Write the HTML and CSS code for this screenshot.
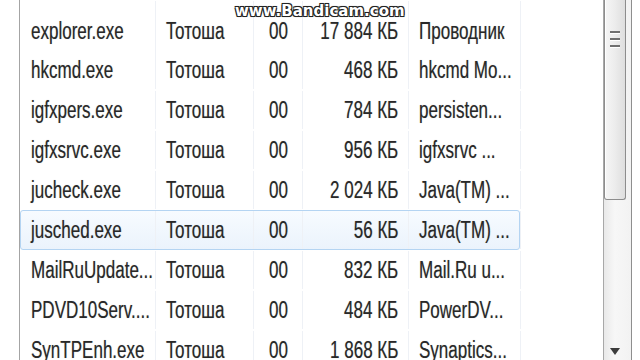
FILE: index.html
```html
<!DOCTYPE html>
<html lang="ru">
<head>
  <meta charset="UTF-8" />
  <meta name="viewport" content="width=device-width, initial-scale=1.0"/>
  <title>Диспетчер задач</title>
  <link rel="stylesheet" href="styles.css">
</head>
<body>

  <div class="window">
    <div class="list">
      <div class="row">
        <div class="cell name"><span>explorer.exe</span></div>
        <div class="cell user"><span>Тотоша</span></div>
        <div class="cell cpu"><span>00</span></div>
        <div class="cell mem"><span>17 884 КБ</span></div>
        <div class="cell desc"><span>Проводник</span></div>
      </div>
      <div class="row">
        <div class="cell name"><span>hkcmd.exe</span></div>
        <div class="cell user"><span>Тотоша</span></div>
        <div class="cell cpu"><span>00</span></div>
        <div class="cell mem"><span>468 КБ</span></div>
        <div class="cell desc"><span>hkcmd Mo...</span></div>
      </div>
      <div class="row">
        <div class="cell name"><span>igfxpers.exe</span></div>
        <div class="cell user"><span>Тотоша</span></div>
        <div class="cell cpu"><span>00</span></div>
        <div class="cell mem"><span>784 КБ</span></div>
        <div class="cell desc"><span>persisten...</span></div>
      </div>
      <div class="row">
        <div class="cell name"><span>igfxsrvc.exe</span></div>
        <div class="cell user"><span>Тотоша</span></div>
        <div class="cell cpu"><span>00</span></div>
        <div class="cell mem"><span>956 КБ</span></div>
        <div class="cell desc"><span>igfxsrvc ...</span></div>
      </div>
      <div class="row">
        <div class="cell name"><span>jucheck.exe</span></div>
        <div class="cell user"><span>Тотоша</span></div>
        <div class="cell cpu"><span>00</span></div>
        <div class="cell mem"><span>2 024 КБ</span></div>
        <div class="cell desc"><span>Java(TM) ...</span></div>
      </div>
      <div class="row selected">
        <div class="cell name"><span>jusched.exe</span></div>
        <div class="cell user"><span>Тотоша</span></div>
        <div class="cell cpu"><span>00</span></div>
        <div class="cell mem"><span>56 КБ</span></div>
        <div class="cell desc"><span>Java(TM) ...</span></div>
      </div>
      <div class="row">
        <div class="cell name"><span>MailRuUpdate...</span></div>
        <div class="cell user"><span>Тотоша</span></div>
        <div class="cell cpu"><span>00</span></div>
        <div class="cell mem"><span>832 КБ</span></div>
        <div class="cell desc"><span>Mail.Ru u...</span></div>
      </div>
      <div class="row">
        <div class="cell name"><span>PDVD10Serv....</span></div>
        <div class="cell user"><span>Тотоша</span></div>
        <div class="cell cpu"><span>00</span></div>
        <div class="cell mem"><span>484 КБ</span></div>
        <div class="cell desc"><span>PowerDV...</span></div>
      </div>
      <div class="row">
        <div class="cell name"><span>SynTPEnh.exe</span></div>
        <div class="cell user"><span>Тотоша</span></div>
        <div class="cell cpu"><span>00</span></div>
        <div class="cell mem"><span>1 868 КБ</span></div>
        <div class="cell desc"><span>Synaptics...</span></div>
      </div>
    </div>

    <div class="scrollbar">
      <div class="thumb">
        <span class="grip"></span>
        <span class="grip"></span>
        <span class="grip"></span>
      </div>
      <div class="arrow-down"></div>
    </div>
  </div>

  <div class="watermark">www.Bandicam.com</div>

</body>
</html>
```

FILE: styles.css
```css
* {
  margin: 0;
  padding: 0;
  box-sizing: border-box;
}

body {
  width: 640px;
  height: 360px;
  overflow: hidden;
  background: #fff;
  font-family: "Liberation Sans", sans-serif;
  font-size: 23px;
  color: #282828;
  position: relative;
}

.window {
  display: flex;
  height: 360px;
  margin-left: 19px;
  border-left: 1px solid #a4a4a4;
}

.list {
  width: 583px;
  padding-top: 10px;
}

.row {
  display: grid;
  grid-template-columns: 135px 98px 49px 106px 112px;
  width: 500px;
  height: 40px;
  align-items: center;
  border: 1px solid transparent;
  border-radius: 3px;
}

.row:first-child .cell {
  height: 50px;
  margin-top: -10px;
  padding-top: 10px;
}

.row.selected {
  border-color: #b4d4f2;
  background: linear-gradient(#f7fbff, #ebf3fc);
}

.cell {
  height: 100%;
  display: flex;
  align-items: center;
  padding-left: 10px;
  white-space: nowrap;
  border-right: 1px solid #eef1f6;
  text-shadow: 0 0 1px rgba(40, 40, 40, 0.35);
}

/* the capture is squeezed sideways, so the glyphs are narrow */
.cell span {
  display: inline-block;
  transform: scaleX(0.74);
  transform-origin: left center;
}

.cpu {
  padding-left: 15px;
}

.mem {
  justify-content: flex-end;
  padding-left: 0;
  padding-right: 10px;
}

.mem span {
  transform-origin: right center;
}

.scrollbar {
  width: 29px;
  position: relative;
  border-left: 1px solid #a8a8a8;
  border-right: 1px solid #8e8e8e;
  background: linear-gradient(to right, #e9e9e9, #f7f7f7 40%, #f2f2f2);
}

.thumb {
  height: 200px;
  width: 22px;
  border: 1px solid #8d8d8d;
  border-top: none;
  border-radius: 0 0 3px 3px;
  background: linear-gradient(to right, #f6f6f6, #ececec 50%, #dedede);
  box-shadow: inset 1px 0 0 #fff;
  display: flex;
  flex-direction: column;
  align-items: center;
  gap: 4px;
  padding-top: 31px;
}

.grip {
  width: 10px;
  height: 3px;
  background: #6f6f6f;
  border-bottom: 1px solid #fff;
}

.arrow-down {
  position: absolute;
  left: 6px;
  bottom: 5px;
  width: 0;
  height: 0;
  border-left: 5px solid transparent;
  border-right: 5px solid transparent;
  border-top: 7px solid #3c3c3c;
}

.watermark {
  position: absolute;
  top: 2px;
  left: 235px;
  font-family: "DejaVu Sans", sans-serif;
  font-weight: bold;
  font-size: 15px;
  color: #fff;
  text-shadow: -1px -1px 0 #222, 1px -1px 0 #222, -1px 1px 0 #222, 1px 1px 0 #222, 0 0 2px #000;
}
```
